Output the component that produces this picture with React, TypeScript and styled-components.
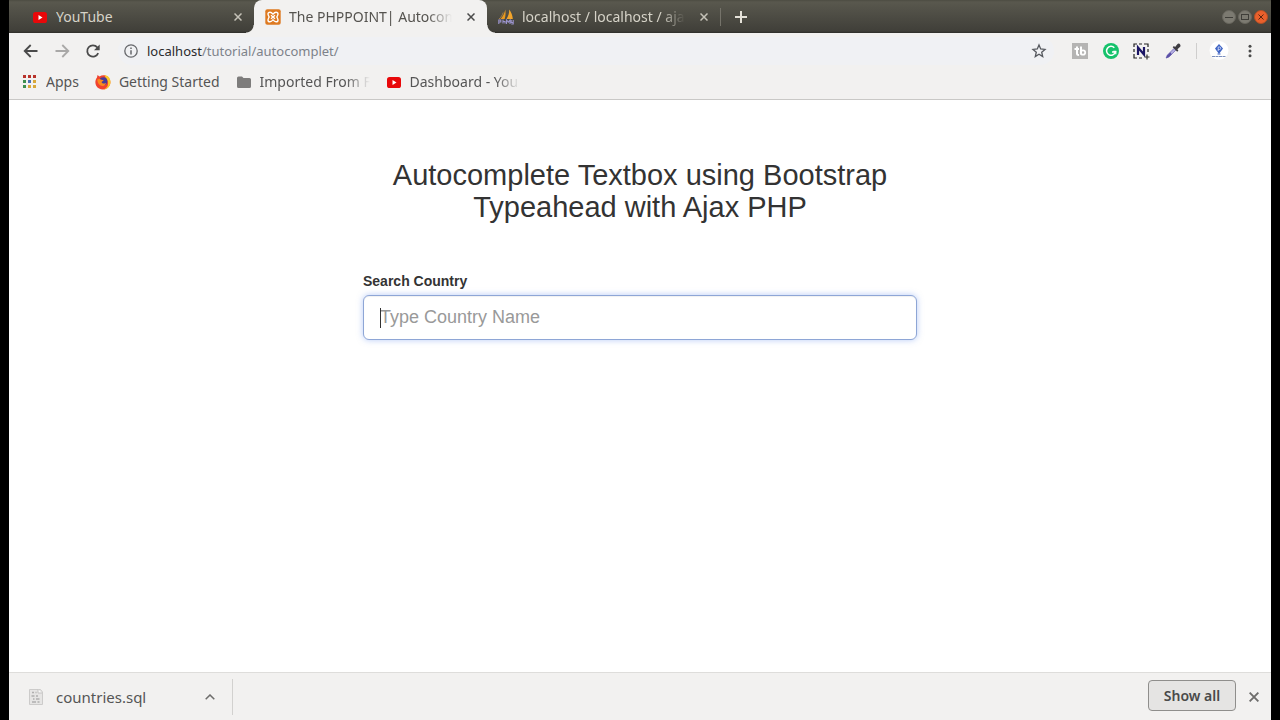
import React from "react";
import styled, { createGlobalStyle } from "styled-components";

const GlobalStyle = createGlobalStyle`
  * { box-sizing: border-box; }
  body { margin: 0; background: #000; }
  button, input { font: inherit; }
  svg { flex: none; }
`;

const Window = styled.div`
  display: flex;
  flex-direction: column;
  min-height: 100vh;
  margin: 0 9px;
  background: #fff;
  font-family: "Noto Sans", "Open Sans", sans-serif;
  font-size: 14px;
  color: #555;
`;

const IconButton = styled.button<{ $width?: number; $color?: string }>`
  display: flex;
  flex: none;
  align-items: center;
  justify-content: center;
  width: ${(p) => p.$width ?? 31}px;
  height: 28px;
  padding: 0;
  border: 0;
  background: none;
  color: ${(p) => p.$color ?? "#4a4a4a"};
`;

const TabStrip = styled.header`
  display: flex;
  align-items: stretch;
  height: 33px;
  padding: 0 3px 0 12px;
  background: linear-gradient(#4c4c42 0, #59584e 2px, #403f39 31px, #2e2d29 33px);
`;

const Tabs = styled.div`
  display: flex;
  flex: 0 1 auto;
  min-width: 0;
`;

const Tab = styled.div<{ $active?: boolean }>`
  position: relative;
  display: flex;
  align-items: center;
  gap: 8px;
  flex: 0 1 auto;
  width: 233px;
  min-width: 0;
  padding: 0 5px 0 11px;
  color: ${(p) => (p.$active ? "#55534f" : "#d6d3c8")};
  background: ${(p) => (p.$active ? "#f2f1f0" : "transparent")};
  border-radius: 8px 8px 0 0;

  ${(p) =>
    p.$active &&
    `
    &::before, &::after {
      content: "";
      position: absolute;
      bottom: 0;
      width: 8px;
      height: 8px;
    }
    &::before {
      left: -8px;
      background: radial-gradient(circle at 0 0, transparent 7px, #f2f1f0 8px);
    }
    &::after {
      right: -8px;
      background: radial-gradient(circle at 100% 0, transparent 7px, #f2f1f0 8px);
    }
  `}
`;

const FadeLabel = styled.span<{ $fade?: boolean }>`
  flex: 1 1 auto;
  min-width: 0;
  overflow: hidden;
  white-space: nowrap;
  line-height: 20px;
  ${(p) => p.$fade && "mask-image: linear-gradient(to left, transparent, #000 24px);"}
`;

const Divider = styled.span<{ $height: number; $color: string }>`
  flex: none;
  align-self: center;
  width: 1px;
  height: ${(p) => p.$height}px;
  background: ${(p) => p.$color};
`;

const NewTab = styled(IconButton)`
  align-self: center;
  margin-left: 4px;
`;

const WindowControls = styled.div`
  display: flex;
  align-items: center;
  gap: 2px;
  margin-left: auto;
`;

const WindowControl = styled.button<{ $close?: boolean }>`
  display: flex;
  width: 14px;
  height: 14px;
  padding: 0;
  border: 1px solid ${(p) => (p.$close ? "#b04f26" : "#68665e")};
  border-radius: 50%;
  background: ${(p) => (p.$close ? "#e9602c" : "#7c7a71")};
  color: ${(p) => (p.$close ? "#5a2510" : "#3f3e39")};
`;

const Toolbar = styled.div`
  display: flex;
  align-items: center;
  height: 36px;
  padding: 0 6px 0 6px;
  background: #f2f1f0;
`;

const AddressBar = styled.div`
  display: flex;
  flex: 1;
  align-items: center;
  gap: 8px;
  min-width: 0;
  height: 28px;
  margin: 0 10px;
  padding: 0 7px 0 5px;
  border-radius: 14px;
  background: #f0f1f4;
`;

const Address = styled.a`
  flex: 1;
  color: #7d828a;
  font-size: 13px;
  text-decoration: none;
  line-height: 20px;
`;

const Host = styled.span`
  color: #2b2b2e;
`;

const ToolbarDivider = styled(Divider)`
  margin: 0 6px 0 8px;
`;

const BookmarkBar = styled.nav`
  display: flex;
  align-items: center;
  gap: 16px;
  height: 31px;
  padding: 0 13px 4px;
  border-bottom: 1px solid #c9c8c6;
  background: #f2f1f0;
`;

const Bookmark = styled.a<{ $width?: number }>`
  display: flex;
  align-items: center;
  gap: 8px;
  width: ${(p) => (p.$width ? `${p.$width}px` : "auto")};
  color: #555;
  text-decoration: none;
`;

const Page = styled.main`
  flex: 1;
  padding: 59px 16px 16px;
  font-family: "Liberation Sans", Arial, sans-serif;
  color: #333;
`;

const Content = styled.div`
  width: 100%;
  max-width: 554px;
  margin: 0 auto;
`;

const Title = styled.h1`
  margin: 0 0 48px;
  padding: 0 15px;
  font-size: 29px;
  font-weight: 400;
  line-height: 32px;
  text-align: center;
`;

const FieldLabel = styled.label`
  display: block;
  margin-bottom: 4px;
  font-size: 14px;
  font-weight: 700;
  line-height: 20px;
`;

const Field = styled.div`
  position: relative;
`;

const SearchInput = styled.input`
  display: block;
  width: 100%;
  height: 45px;
  padding: 10px 16px;
  border: 1px solid #8ea6d6;
  border-radius: 6px;
  outline: none;
  box-shadow: inset 0 1px 1px rgba(0, 0, 0, 0.06), 0 0 6px rgba(110, 150, 240, 0.5);
  background: #fff;
  color: #333;
  caret-color: transparent;
  font-size: 18px;
  line-height: 24px;

  &::placeholder { color: #999; opacity: 1; }
`;

const Caret = styled.span`
  position: absolute;
  top: 13px;
  left: 17px;
  width: 1px;
  height: 20px;
  background: #333;
  pointer-events: none;
`;

const DownloadShelf = styled.footer`
  display: flex;
  align-items: center;
  height: 48px;
  padding: 0 2px 0 19px;
  border-top: 1px solid #dedddb;
  background: #f2f1f0;
`;

const DownloadItem = styled.div`
  display: flex;
  align-items: center;
  gap: 12px;
  width: 205px;
  height: 36px;
  padding-right: 7px;
  border-right: 1px solid #d2d1cf;
  font-size: 15px;
`;

const FileName = styled.span`
  flex: 1;
  line-height: 20px;
`;

const ShowAll = styled.button`
  width: 88px;
  height: 31px;
  margin: 0 2px 2px auto;
  padding: 0;
  border: 1px solid #8f8e8c;
  border-radius: 4px;
  background: #e5e4e3;
  color: #4a4a4a;
  font-weight: 600;
`;

function CloseGlyph({ size = 8 }: { size?: number }) {
  return (
    <svg width={size} height={size} viewBox="0 0 8 8" stroke="currentColor" strokeWidth="1.500" fill="none">
      <path d="M.5.5l7 7M7.5.5l-7 7" />
    </svg>
  );
}

function YouTubeIcon() {
  return (
    <svg width="16" height="16" viewBox="0 0 16 16">
      <rect x="1" y="3" width="14" height="11" rx="2.6" fill="#e8080a" />
      <path d="M6.500 6v5l4-2.500z" fill="#fff" />
    </svg>
  );
}

function XamppIcon() {
  return (
    <svg width="16" height="16" viewBox="0 0 16 16">
      <rect x=".3" y=".3" width="15.400" height="15.400" rx="2" fill="#de7a21" />
      <path
        d="M5 3.200c-1.300 0-2 .8-2 1.900 0 1 .5 1.600 1.200 2.900C3.500 9.300 3 9.900 3 10.900c0 1.100.7 1.900 2 1.900 1.200 0 2-.7 3-1.900 1 1.200 1.800 1.900 3 1.900 1.300 0 2-.8 2-1.900 0-1-.5-1.600-1.200-2.900.7-1.300 1.200-1.900 1.200-2.900 0-1.100-.7-1.900-2-1.900-1.200 0-2 .7-3 1.900-1-1.200-1.800-1.900-3-1.900z"
        fill="none"
        stroke="#fff"
        strokeWidth="1.400"
      />
      <path d="M6 6.200l4 3.600M10 6.200L6 9.800" stroke="#fff" strokeWidth="1.300" />
    </svg>
  );
}

function PhpMyAdminIcon() {
  return (
    <svg width="16" height="16" viewBox="0 0 16 16">
      <path d="M7.300.5c.5 3 .4 6-.6 9.500H2.500C4.800 7.500 6.500 4.500 7.300.5z" fill="#e8981e" />
      <path d="M11.300.5c2 2.700 3.300 6 3.500 9.500H8.500c1.800-2.700 2.800-6 2.800-9.500z" fill="#f3a52b" />
      <path d="M5.200 3.500C4.500 6 3 8.300 1 10" stroke="#b98b45" strokeWidth=".8" fill="none" />
      <path d="M.8 15v-4h2v2h-2M5 10.500v4M5 12.500h2v2M8.500 15v-4l1.800 2.200L12 11v4M13.200 11v2.500h2V11v4h-2" stroke="#9a93cc" strokeWidth="1.100" fill="none" />
    </svg>
  );
}

function BackIcon({ flip }: { flip?: boolean }) {
  return (
    <svg width="16" height="16" viewBox="0 0 16 16" fill="none" stroke="currentColor" strokeWidth="1.800">
      <path d={flip ? "M1.500 8h12.500M8.300 2l6 6-6 6" : "M14.500 8H2M7.700 2l-6 6 6 6"} />
    </svg>
  );
}

function ReloadIcon() {
  return (
    <svg width="16" height="16" viewBox="0 0 16 16">
      <path d="M13.200 10.200A5.700 5.700 0 1 1 12.300 4.300L13.500 5.500" fill="none" stroke="currentColor" strokeWidth="1.800" />
      <path d="M14.700 1.500v5.700H9z" fill="currentColor" />
    </svg>
  );
}

function InfoIcon() {
  return (
    <svg width="16" height="16" viewBox="0 0 16 16" fill="none" stroke="#66686c">
      <circle cx="8" cy="8" r="6.200" strokeWidth="1.300" />
      <path d="M8 7.200v4.300M8 4.400v1.500" strokeWidth="1.500" />
    </svg>
  );
}

function StarIcon() {
  return (
    <svg width="16" height="16" viewBox="0 0 16 16">
      <path
        d="M8 2l1.700 4 4.300.4-3.300 2.800 1 4.300L8 11.200l-3.700 2.300 1-4.300L2 6.400 6.300 6z"
        fill="none"
        stroke="#55585e"
        strokeWidth="1.300"
      />
    </svg>
  );
}

function TubeBuddyIcon() {
  return (
    <svg width="16" height="16" viewBox="0 0 16 16">
      <path d="M0 0h16v16H0z" fill="#b5b4b3" />
      <path d="M5 3.500v7q0 1.500 2 1.500M2.500 6h4.500M9 3.500v8" fill="none" stroke="#fff" strokeWidth="2" />
      <circle cx="11" cy="9.500" r="2.200" fill="none" stroke="#fff" strokeWidth="1.800" />
    </svg>
  );
}

function GrammarlyIcon() {
  return (
    <svg width="16" height="16" viewBox="0 0 16 16">
      <circle cx="8" cy="8" r="8" fill="#15c26b" />
      <path d="M11.300 4.700A4.500 4.500 0 1 0 12.400 9H9" fill="none" stroke="#fff" strokeWidth="1.500" />
      <path d="M10.300 8.300h2.500v3" fill="none" stroke="#fff" strokeWidth="1.200" />
    </svg>
  );
}

function NimbusIcon() {
  return (
    <svg width="17" height="17" viewBox="0 0 17 17" fill="none">
      <path
        d="M1 4V1h3M6 1h3M11 1h4v3M15 6v3M1 6v3M1 11v4h3M6 15h3"
        stroke="#222"
        strokeWidth="1.200"
      />
      <path d="M5 12V4.500l6 7V4" stroke="#1b1464" strokeWidth="2.200" />
      <path d="M14 11.500v5M11.500 14h5" stroke="#333" strokeWidth="1.200" />
    </svg>
  );
}

function DropperIcon() {
  return (
    <svg width="16" height="16" viewBox="0 0 16 16">
      <path d="M9.200 5.300L2.500 12l-1.400 3 3-1.200 6.800-6.800z" fill="#b5b0e2" stroke="#7a72bb" strokeWidth=".9" />
      <path d="M1 15.200l1.300-3 3-3 1.500 2-2.800 2.800z" fill="#5a4fa5" />
      <path d="M7.700 4.200l1.200-1.200 1.200 1 2-2.600c1-1.200 2.400-1 3 0 .6.900.6 1.900-.2 2.700l-2.500 2.200 1 1.100-1.200 1.300z" fill="#3f3d42" />
    </svg>
  );
}

function AvatarIcon() {
  return (
    <svg width="20" height="20" viewBox="0 0 20 20">
      <circle cx="10" cy="9.500" r="9.500" fill="#fff" />
      <path d="M10 3l4 4.500-4 5.500-4-5.500z" fill="#3e63c4" />
      <path d="M9.200 10V6h1.300a1.200 1.200 0 0 1 0 2.500H9.200" fill="none" stroke="#c9d5f5" strokeWidth=".9" />
      <path d="M8.500 13h3" stroke="#3e63c4" />
      <path d="M3 15.500h14" stroke="#7b8fbe" strokeWidth="1.200" strokeDasharray="3 .5" />
    </svg>
  );
}

function KebabIcon() {
  return (
    <svg width="16" height="16" viewBox="0 0 16 16" fill="currentColor">
      <circle cx="8" cy="3.200" r="1.500" />
      <circle cx="8" cy="8" r="1.500" />
      <circle cx="8" cy="12.800" r="1.500" />
    </svg>
  );
}

function AppsIcon() {
  const colors = ["#b8332b", "#b8332b", "#b8332b", "#3d8f4f", "#4a6fb5", "#d8a83a", "#3d8f4f", "#d8a83a", "#d8a83a"];
  return (
    <svg width="16" height="16" viewBox="0 0 16 16">
      {colors.map((color, i) => (
        <rect key={i} x={1 + (i % 3) * 5} y={1 + Math.floor(i / 3) * 5} width="3" height="3" fill={color} />
      ))}
    </svg>
  );
}

function FirefoxIcon() {
  return (
    <svg width="16" height="16" viewBox="0 0 16 16">
      <path d="M2 3.500L2.500 1l2 1.600C7 1 10.500.8 13 3c3.500 3.200 3 8.700-.8 11.200-3.700 2.400-8.700 1.400-11-2.500C-.2 9 .2 5.800 2 3.500z" fill="#f0432f" />
      <path d="M9.500 1C14 1.800 15.800 5.200 15.500 8.700 15 13 11.500 15.600 8 15.500c4-1 5.500-4 5-7.500C12.500 5 10 4 9.500 1z" fill="#fcc927" />
      <circle cx="8.300" cy="7.200" r="4" fill="#473c96" />
      <path d="M2.300 5.500c1.500-.8 2.900-.7 4.200.2l2.300.5-2.200 1.700c.4 1.700 2.400 2 4.600 1-1 3.400-5 4-7 1.700C3 9.200 2.400 7.500 2.300 5.500z" fill="#fa8a1c" />
    </svg>
  );
}

function FolderIcon() {
  return (
    <svg width="16" height="16" viewBox="0 0 16 16">
      <path d="M1 4q0-1.500 1.500-1.500H6L7.500 4H13.500q1.500 0 1.500 1.500V12.500Q15 14 13.500 14H2.500Q1 14 1 12.500z" fill="#7d7c7b" />
    </svg>
  );
}

function FileIcon() {
  return (
    <svg width="16" height="16" viewBox="0 0 16 16">
      <path d="M1.500.5h11l2 2.500v12.500h-13z" fill="#e6e5e4" stroke="#cccbca" />
      <path d="M10 .5V4h4" fill="#fafafa" stroke="#c3c2c1" />
      <path d="M4 3.500h2M7.500 3.500h1M3.500 7h3M8 7h2M5 10h1.500M8 10h3.500M4 13h4M9.500 13h2" stroke="#b0afae" strokeWidth="1.300" />
    </svg>
  );
}

export default function App() {
  return (
    <>
      <GlobalStyle />
      <Window>
        <TabStrip>
          <Tabs>
            <Tab>
              <YouTubeIcon />
              <FadeLabel>YouTube</FadeLabel>
              <IconButton $width={22} $color="#c5c2b8" aria-label="Close YouTube tab">
                <CloseGlyph />
              </IconButton>
            </Tab>
            <Tab $active>
              <XamppIcon />
              <FadeLabel $fade>The PHPPOINT| Autocomp</FadeLabel>
              <IconButton $width={22} aria-label="Close The PHPPOINT tab">
                <CloseGlyph />
              </IconButton>
            </Tab>
            <Tab>
              <PhpMyAdminIcon />
              <FadeLabel $fade>localhost / localhost / ajax</FadeLabel>
              <IconButton $width={22} $color="#c5c2b8" aria-label="Close localhost tab">
                <CloseGlyph />
              </IconButton>
            </Tab>
          </Tabs>
          <Divider $height={18} $color="#75736a" />
          <NewTab $color="#e4e1d8" aria-label="New tab">
            <svg width="12" height="12" viewBox="0 0 12 12" stroke="currentColor" strokeWidth="2">
              <path d="M6 0v12M0 6h12" />
            </svg>
          </NewTab>
          <WindowControls>
            <WindowControl aria-label="Minimize">
              <svg width="12" height="12" viewBox="0 0 12 12" stroke="currentColor">
                <path d="M2 6.500h8" />
              </svg>
            </WindowControl>
            <WindowControl aria-label="Maximize">
              <svg width="12" height="12" viewBox="0 0 12 12" stroke="currentColor" fill="none">
                <rect x="2.500" y="3.500" width="7" height="5" />
              </svg>
            </WindowControl>
            <WindowControl $close aria-label="Close window">
              <svg width="12" height="12" viewBox="0 0 12 12" stroke="currentColor">
                <path d="M3.500 3.500l5 5M8.500 3.500l-5 5" />
              </svg>
            </WindowControl>
          </WindowControls>
        </TabStrip>

        <Toolbar>
          <IconButton aria-label="Back"><BackIcon /></IconButton>
          <IconButton $color="#a9a8a7" aria-label="Forward"><BackIcon flip /></IconButton>
          <IconButton aria-label="Reload"><ReloadIcon /></IconButton>
          <AddressBar>
            <InfoIcon />
            <Address href="#"><Host>localhost</Host>/tutorial/autocomplet/</Address>
            <IconButton $width={16} aria-label="Bookmark this page"><StarIcon /></IconButton>
          </AddressBar>
          <IconButton aria-label="TubeBuddy"><TubeBuddyIcon /></IconButton>
          <IconButton aria-label="Grammarly"><GrammarlyIcon /></IconButton>
          <IconButton aria-label="Nimbus"><NimbusIcon /></IconButton>
          <IconButton aria-label="Color picker"><DropperIcon /></IconButton>
          <ToolbarDivider $height={16} $color="#cfcecd" />
          <IconButton aria-label="Profile"><AvatarIcon /></IconButton>
          <IconButton aria-label="Menu"><KebabIcon /></IconButton>
        </Toolbar>

        <BookmarkBar>
          <Bookmark href="#">
            <AppsIcon />
            <FadeLabel>Apps</FadeLabel>
          </Bookmark>
          <Bookmark href="#">
            <FirefoxIcon />
            <FadeLabel>Getting Started</FadeLabel>
          </Bookmark>
          <Bookmark href="#" $width={134}>
            <FolderIcon />
            <FadeLabel $fade>Imported From F</FadeLabel>
          </Bookmark>
          <Bookmark href="#" $width={134}>
            <YouTubeIcon />
            <FadeLabel $fade>Dashboard - You</FadeLabel>
          </Bookmark>
        </BookmarkBar>

        <Page>
          <Content>
            <Title>Autocomplete Textbox using Bootstrap Typeahead with Ajax PHP</Title>
            <FieldLabel htmlFor="country">Search Country</FieldLabel>
            <Field>
              <SearchInput id="country" type="text" placeholder="Type Country Name" autoComplete="off" />
              <Caret aria-hidden="true" />
            </Field>
          </Content>
        </Page>

        <DownloadShelf>
          <DownloadItem>
            <FileIcon />
            <FileName>countries.sql</FileName>
            <IconButton $color="#6d6c6b" aria-label="Download options">
              <svg width="10" height="6" viewBox="0 0 10 6" fill="none" stroke="currentColor" strokeWidth="1.500">
                <path d="M.7 5.300L5 1l4.300 4.300" />
              </svg>
            </IconButton>
          </DownloadItem>
          <ShowAll>Show all</ShowAll>
          <IconButton $color="#6d6c6b" aria-label="Close downloads bar">
            <CloseGlyph size={10} />
          </IconButton>
        </DownloadShelf>
      </Window>
    </>
  );
}
